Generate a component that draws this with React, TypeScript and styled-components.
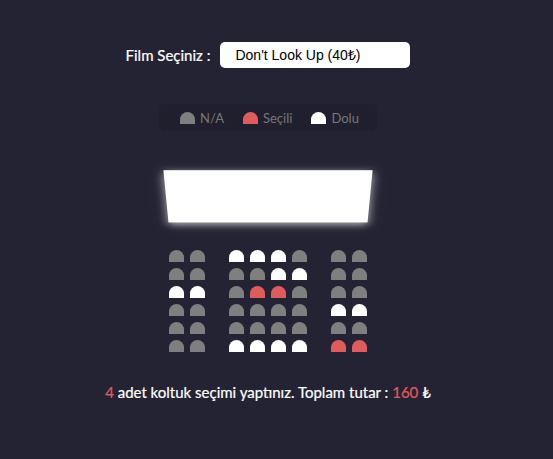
import React from "react";
import styled, { createGlobalStyle } from "styled-components";

const GlobalStyle = createGlobalStyle`
  html, body {
    margin: 0;
    padding: 0;
  }
  body {
    background-color: #242333;
    color: #fff;
    font-family: "Lato", "Open Sans", sans-serif;
    height: 459px;
    overflow: hidden;
  }
`;

type SeatKind = "na" | "sel" | "full";

const seatColor: Record<SeatKind, string> = {
  na: "#7f7f7f",
  sel: "#e05b5b",
  full: "#ffffff",
};

const Page = styled.div`
  display: flex;
  flex-direction: column;
  align-items: center;
  padding: 22px 17px 0 0;
`;

const MovieRow = styled.div`
  margin: 20px 0;
  display: flex;
  align-items: center;
`;

const Label = styled.label`
  font-size: 15px;
  -webkit-text-stroke: 0.2px #fff;
`;

const Select = styled.select`
  appearance: none;
  -webkit-appearance: none;
  background-color: #fff;
  border: 0;
  border-radius: 5px;
  font-family: "Liberation Sans", Arial, sans-serif;
  font-size: 14px;
  color: #000;
  margin-left: 10px;
  padding: 5px 15px;
  width: 190px;
  height: 26px;
  line-height: 16px;
  outline: none;
`;

const Showcase = styled.ul`
  background: rgba(0, 0, 0, 0.1);
  padding: 5px 10px;
  border-radius: 5px;
  color: #777;
  list-style-type: none;
  display: flex;
  justify-content: space-between;
  margin: 16px 0;
`;

const LegendItem = styled.li`
  display: flex;
  align-items: center;
  justify-content: center;
  margin: 0 8px;
  height: 17px;
`;

const LegendText = styled.small`
  margin-left: 2px;
  font-size: 13px;
`;

const Seat = styled.div<{ $kind: SeatKind }>`
  background-color: ${(p) => seatColor[p.$kind]};
  height: 12px;
  width: 15px;
  margin: 3px;
  border-top-left-radius: 10px;
  border-top-right-radius: 10px;
`;

const Hall = styled.div`
  perspective: 1000px;
  margin-bottom: 23px;
`;

const Screen = styled.div`
  background-color: #fff;
  height: 70px;
  width: 100%;
  margin: 15px 0;
  transform: rotateX(-45deg);
  box-shadow: 0 3px 10px rgba(255, 255, 255, 0.7);
`;

const Row = styled.div`
  display: flex;
`;

const Block = styled.div<{ $gapRight?: boolean }>`
  display: flex;
  margin-right: ${(p) => (p.$gapRight ? "18px" : "0")};
`;

const Summary = styled.p`
  margin: 5px 0;
  font-size: 15px;
  -webkit-text-stroke: 0.2px #fff;
`;

const Accent = styled.span`
  color: #e05b5b;
  -webkit-text-stroke: 0.2px #e05b5b;
`;

const rows: SeatKind[][][] = [
  [["na", "na"], ["full", "full", "full", "na"], ["na", "na"]],
  [["na", "na"], ["na", "na", "full", "full"], ["na", "na"]],
  [["full", "full"], ["na", "sel", "sel", "na"], ["na", "na"]],
  [["na", "na"], ["na", "na", "na", "na"], ["full", "full"]],
  [["na", "na"], ["na", "na", "na", "na"], ["na", "na"]],
  [["na", "na"], ["full", "full", "full", "full"], ["sel", "sel"]],
];

export default function App() {
  const price = 40;
  const count = rows.flat(2).filter((s) => s === "sel").length;
  return (
    <>
      <GlobalStyle />
      <Page>
        <MovieRow>
          <Label htmlFor="movie">Film Seçiniz :</Label>
          <Select id="movie" defaultValue="40">
            <option value="40">Don't Look Up (40₺)</option>
            <option value="35">Dune (35₺)</option>
          </Select>
        </MovieRow>

        <Showcase>
          <LegendItem>
            <Seat $kind="na" />
            <LegendText>N/A</LegendText>
          </LegendItem>
          <LegendItem>
            <Seat $kind="sel" />
            <LegendText>Seçili</LegendText>
          </LegendItem>
          <LegendItem>
            <Seat $kind="full" />
            <LegendText>Dolu</LegendText>
          </LegendItem>
        </Showcase>

        <Hall>
          <Screen />
          {rows.map((row, ri) => (
            <Row key={ri}>
              {row.map((block, bi) => (
                <Block key={bi} $gapRight={bi < row.length - 1}>
                  {block.map((kind, si) => (
                    <Seat key={si} $kind={kind} />
                  ))}
                </Block>
              ))}
            </Row>
          ))}
        </Hall>

        <Summary>
          <Accent>{count}</Accent> adet koltuk seçimi yaptınız. Toplam tutar :{" "}
          <Accent>{count * price}</Accent> ₺
        </Summary>
      </Page>
    </>
  );
}
